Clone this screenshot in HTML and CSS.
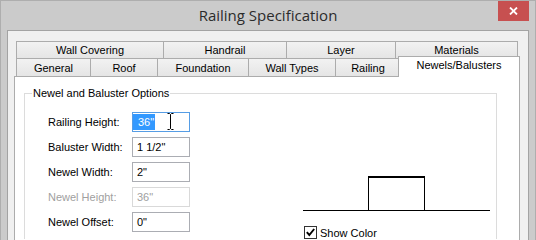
FILE: index.html
```html
<!DOCTYPE html>
<html lang="en">
  <head>
    <meta charset="UTF-8" />
    <title>Railing Specification</title>
    <link rel="stylesheet" href="styles.css">
  </head>
  <body>
    <div class="window">
      <div class="titlebar">
        <div class="title">Railing Specification</div>
        <div class="close">
          <svg width="9" height="8" viewBox="0 0 9 8"><path d="M1 0.5 L8 7.5 M8 0.5 L1 7.5" stroke="#fff" stroke-width="1.8" /></svg>
        </div>
      </div>
      <div class="client">
        <div class="tabrow tabrow-top">
          <div class="tab tab-covering">Wall Covering</div>
          <div class="tab tab-handrail">Handrail</div>
          <div class="tab tab-layer">Layer</div>
          <div class="tab tab-materials">Materials</div>
        </div>
        <div class="tabrow tabrow-bottom">
          <div class="tab tab-general">General</div>
          <div class="tab tab-roof">Roof</div>
          <div class="tab tab-foundation">Foundation</div>
          <div class="tab tab-walltypes">Wall Types</div>
          <div class="tab tab-railing">Railing</div>
          <div class="tab tab-newels selected">Newels/Balusters</div>
        </div>
        <div class="panel">
          <fieldset class="group">
            <legend>Newel and Baluster Options</legend>
            <div class="group-body">
              <div class="fields">
                <label>Railing Height:</label>
                <div class="field focused">
                  <span class="sel">36"</span>
                  <svg class="ibeam" width="7" height="17" viewBox="0 0 7 17"><path d="M0.5 0.5 H2.5 L3.5 1.5 L4.5 0.5 H6.5 M3.5 1.5 V15.5 M0.5 16.5 H2.5 L3.5 15.5 L4.5 16.5 H6.5" stroke="#000" fill="none" stroke-width="1" /></svg>
                </div>
                <label>Baluster Width:</label>
                <div class="field">1 1/2"</div>
                <label>Newel Width:</label>
                <div class="field">2"</div>
                <label class="disabled">Newel Height:</label>
                <div class="field disabled">36"</div>
                <label>Newel Offset:</label>
                <div class="field">0"</div>
              </div>
              <div class="preview">
                <div class="diagram"><div class="post"></div></div>
                <div class="check">
                  <span class="box"><svg width="11" height="11" viewBox="0 0 11 11"><path d="M1.8 5.2 L4.3 8 L9.2 2" stroke="#000" fill="none" stroke-width="1.9" /></svg></span>
                  <span>Show Color</span>
                </div>
              </div>
            </div>
          </fieldset>
        </div>
      </div>
    </div>
  </body>
</html>
```

FILE: styles.css
```css
* {
  box-sizing: border-box;
}
body {
  margin: 0;
  width: 536px;
  height: 240px;
  overflow: hidden;
  font: 11px "Liberation Sans", Arial, sans-serif;
  color: #000;
}

/* window frame */
.window {
  height: 240px;
  overflow: hidden;
  border: 1px solid #aeaeae;
  border-bottom: 0;
  background: #cbcbcb;
  padding: 0 6px;
  display: flex;
  flex-direction: column;
}
.titlebar {
  flex: none;
  height: 29px;
  display: grid;
  grid-template-columns: 1fr auto 1fr;
}
.title {
  grid-column: 2;
  font: 15px "Open Sans", sans-serif;
  color: #2b2b2b;
  line-height: 28px;
}
.close {
  grid-column: 3;
  justify-self: end;
  width: 31px;
  height: 20px;
  background: #c75050;
  display: flex;
  align-items: center;
  justify-content: center;
}
.client {
  flex: 1;
  display: flex;
  flex-direction: column;
  border: 1px solid #a3a3a3;
  border-bottom: 0;
  background: #f0f0f0;
  padding: 10px 8px 0 6px;
}

/* tabs */
.tabrow {
  display: flex;
  align-items: flex-start;
  margin: 0 2px;
}
.tab {
  border: 1px solid #acacac;
  border-width: 1px 0 0 1px;
  background: linear-gradient(#f2f2f2, #e5e5e5);
  text-align: center;
  white-space: nowrap;
}
.tab:last-child {
  border-right-width: 1px;
}
.tabrow-top .tab {
  height: 17px;
  line-height: 16px;
}
.tabrow-bottom .tab {
  height: 18px;
  padding-top: 1px;
  line-height: 16px;
}
.tabrow-bottom .tab.selected {
  position: relative;
  z-index: 1;
  height: 21px;
  margin: -2px -2px -1px -2px;
  padding-top: 0;
  line-height: 17px;
  background: #fff;
}
.tab-covering { width: 147px; }
.tab-handrail { width: 123px; }
.tab-layer { width: 109px; }
.tab-materials { width: 123px; }
.tab-general { width: 74px; }
.tab-roof { width: 67px; }
.tab-foundation { width: 91px; }
.tab-walltypes { width: 87px; }
.tab-railing { width: 65px; }
.tab-newels { width: 122px; }

.panel {
  flex: 1;
  width: 506px;
  background: #fff;
  border: 1px solid #acacac;
  border-bottom: 0;
  padding: 9px 0 0 9px;
}

/* group box */
.group {
  width: 473px;
  margin: 0;
  border: 1px solid #dcdcdc;
  border-bottom: 0;
  padding: 0 6px 0 7px;
}
.group legend {
  padding: 0 1px;
  line-height: 14px;
}
.group-body {
  display: flex;
  padding: 12px 0 0 16px;
}
.fields {
  display: grid;
  grid-template-columns: 84px 58px;
  grid-auto-rows: 20px;
  row-gap: 5px;
  align-items: center;
}
.field {
  position: relative;
  height: 20px;
  border: 1px solid #abadb3;
  background: #fff;
  padding-left: 4px;
  line-height: 18px;
}
.field.focused {
  border-color: #569de5;
  padding-left: 0;
}
.sel {
  display: inline-block;
  vertical-align: top;
  margin-top: 1px;
  padding: 0 1px 0 5px;
  line-height: 16px;
  background: #3399ff;
  color: #fff;
}
.ibeam {
  position: absolute;
  left: 34px;
  top: 0;
}
.disabled {
  color: #a0a0a0;
}
.field.disabled {
  border-color: #d9d9d9;
}

/* preview */
.preview {
  width: 187px;
  margin-left: auto;
  padding-top: 64px;
}
.diagram {
  height: 35px;
  border-bottom: 1px solid #000;
  display: flex;
  justify-content: center;
  align-items: flex-end;
}
.post {
  width: 57px;
  height: 34px;
  border: 1px solid #000;
  border-top-width: 2px;
  border-bottom: 0;
}
.check {
  display: flex;
  align-items: center;
  gap: 3px;
  margin: 15px 0 0 1px;
}
.box {
  display: flex;
  width: 13px;
  height: 13px;
  border: 1px solid #333;
  background: #fff;
}
```
